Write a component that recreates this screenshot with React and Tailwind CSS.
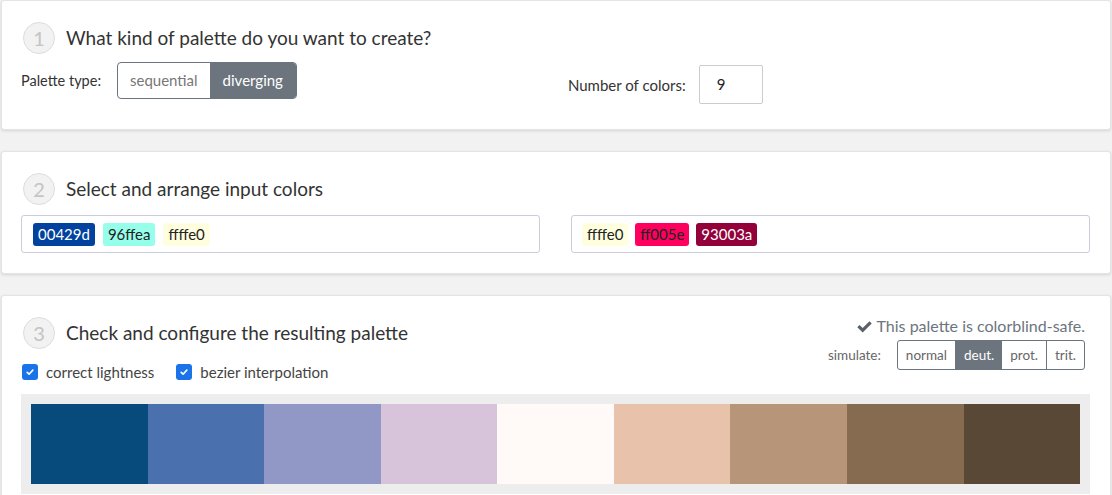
import React from 'react';

const swatches = ['#074a7c', '#4a71ae', '#9198c6', '#d7c4da', '#fffaf8', '#e9c2ab', '#b79578', '#876b51', '#5a4836'];

function StepNum({ n }) {
  return (
    <div className="w-8 h-8 rounded-full bg-[#f2f2f2] border border-[#ddd] flex items-center justify-center text-[20px] text-[#c4c4c4] shrink-0">
      {n}
    </div>
  );
}

function Card({ children, className = '' }) {
  return (
    <div className={`bg-white border border-[#e4e4e4] rounded-[3px] shadow-[0_1px_3px_rgba(0,0,0,0.12)] pl-[19px] pr-[20px] ${className}`}>
      {children}
    </div>
  );
}

function Chip({ hex, dark }) {
  return (
    <span
      className={`h-[23px] px-[5px] rounded-[3px] flex items-center text-[15px] ${dark ? 'text-white' : 'text-[#222]'}`}
      style={{ background: '#' + hex }}
    >
      {hex}
    </span>
  );
}

function CheckBox({ label }) {
  return (
    <label className="flex items-center gap-[8px] text-[15px] text-[#444]">
      <span className="w-4 h-4 rounded-[3px] bg-[#1a73e8] flex items-center justify-center">
        <svg viewBox="0 0 16 16" className="w-[10px] h-[10px]" fill="none" stroke="white" strokeWidth="2.6" strokeLinecap="round" strokeLinejoin="round">
          <path d="M3.5 8.5l3 3 6-6.5" />
        </svg>
      </span>
      {label}
    </label>
  );
}

export default function App() {
  return (
    <div className="min-h-screen bg-[#f2f2f2] px-[1px] flex flex-col gap-[21px] text-[#333]" style={{ fontFamily: 'Lato, "Open Sans", sans-serif' }}>
      <Card className="pt-[21px] h-[130px]">
        <div className="flex items-center gap-[11px] pl-[2px]">
          <StepNum n={1} />
          <h2 className="text-[19px]">What kind of palette do you want to create?</h2>
        </div>
        <div className="flex items-start mt-[8px]">
          <span className="text-[14.5px] text-[#333] w-[96px] mt-[8px]">Palette type:</span>
          <div className="flex h-[37px] border border-[#6c757d] rounded-[4px] overflow-hidden text-[15px]">
            <span className="px-[12px] flex items-center text-[#777]">sequential</span>
            <span className="px-[13px] flex items-center bg-[#6c757d] text-white">diverging</span>
          </div>
          <span className="ml-[271px] mt-[12px] text-[15px]">Number of colors:</span>
          <div className="ml-[13px] mt-[3px] w-[64px] h-[39px] border border-[#ccc] rounded-[2px] flex items-center pl-[17px] text-[15px] text-[#222]">9</div>
        </div>
      </Card>

      <Card className="pt-[21px] h-[123px]">
        <div className="flex items-center gap-[11px] pl-[2px]">
          <StepNum n={2} />
          <h2 className="text-[19px]">Select and arrange input colors</h2>
        </div>
        <div className="grid grid-cols-2 gap-[31px] mt-[10px]">
          <div className="h-[38px] border border-[#ccd] rounded-[3px] flex items-center gap-[8px] px-[11px]">
            <Chip hex="00429d" dark />
            <Chip hex="96ffea" />
            <Chip hex="ffffe0" />
          </div>
          <div className="h-[38px] border border-[#ccd] rounded-[3px] flex items-center gap-[7px] px-[10px]">
            <Chip hex="ffffe0" />
            <Chip hex="ff005e" />
            <Chip hex="93003a" dark />
          </div>
        </div>
      </Card>

      <Card className="pt-[21px] pb-[10px] flex-1">
        <div className="flex justify-between">
          <div>
            <div className="flex items-center gap-[11px] pl-[2px]">
              <StepNum n={3} />
              <h2 className="text-[19px]">Check and configure the resulting palette</h2>
            </div>
            <div className="flex items-center gap-[22px] mt-[12px] pl-[1px]">
              <CheckBox label="correct lightness" />
              <CheckBox label="bezier interpolation" />
            </div>
          </div>
          <div className="flex flex-col items-end pr-[5px] -mt-[3px]">
            <div className="flex items-center gap-[4px] text-[16px] text-[#6c757d]">
              <svg viewBox="0 0 16 16" className="w-[17px] h-[17px]" fill="#5a6068">
                <path d="M1.2 8.6l2.1-2.1 3 3L12.7 3l2.1 2.1-8.5 8.5z" />
              </svg>
              This palette is colorblind-safe.
            </div>
            <div className="flex items-center mt-[2px]">
              <span className="text-[13.5px] text-[#666] mr-[16px]">simulate:</span>
              <div className="flex h-[30px] border border-[#6c757d] rounded-[3px] overflow-hidden text-[13.5px] text-[#666]">
                <span className="px-[8px] flex items-center border-r border-[#6c757d]">normal</span>
                <span className="px-[8px] flex items-center bg-[#6c757d] text-white">deut.</span>
                <span className="px-[8px] flex items-center border-r border-[#6c757d]">prot.</span>
                <span className="px-[8px] flex items-center">trit.</span>
              </div>
            </div>
          </div>
        </div>
        <div className="mt-[10px] bg-[#ededed] p-[10px] flex">
          {swatches.map(c => (
            <div key={c} className="flex-1 h-[80px]" style={{ background: c }} />
          ))}
        </div>
      </Card>
    </div>
  );
}
